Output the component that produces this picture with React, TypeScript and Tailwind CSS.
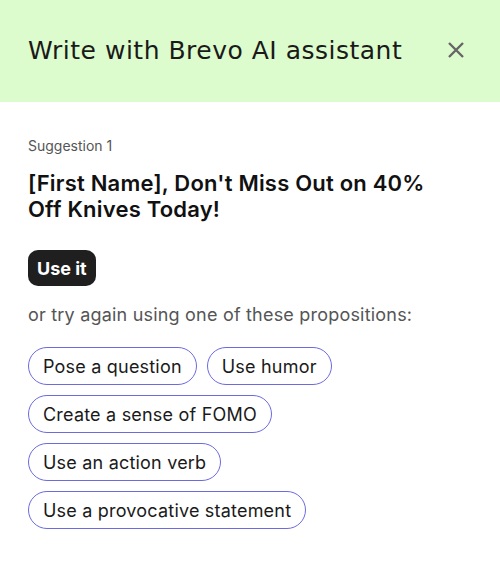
import React from "react";

const chips = [
  ["Pose a question", "Use humor"],
  ["Create a sense of FOMO"],
  ["Use an action verb"],
  ["Use a provocative statement"],
];

export default function App() {
  return (
    <div className="w-[500px] h-[569px] bg-white" style={{ fontFamily: "Inter, 'Noto Sans', sans-serif" }}>
      <div className="h-[102px] bg-[#ddfccd] flex items-center justify-between pl-[28px] pr-[36px]">
        <h1 className="text-[25px] text-[#1a1a1a] font-normal tracking-[0.5px]" style={{ fontFamily: "'DejaVu Sans', sans-serif" }}>
          Write with Brevo AI assistant
        </h1>
        <svg width="16" height="16" viewBox="0 0 16 16" className="mt-[-2px]">
          <path d="M1 1L15 15M15 1L1 15" stroke="#666" strokeWidth="2.4" />
        </svg>
      </div>
      <div className="px-[28px] pt-[36px]">
        <div className="text-[14px] text-[#555] leading-[16px]">Suggestion 1</div>
        <div className="mt-[16px] max-w-[420px] text-[22px] font-semibold leading-[26px] text-[#111] tracking-[0.2px]">
          [First Name], Don't Miss Out on 40% Off Knives Today!
        </div>
        <button className="mt-[28px] h-[36px] px-[9px] rounded-[10px] bg-[#1f1f1f] text-white text-[18px] font-bold block">
          Use it
        </button>
        <div className="mt-[17px] text-[18px] text-[#555] leading-[24px] tracking-[0.2px]">
          or try again using one of these propositions:
        </div>
        <div className="mt-[20px] flex flex-col gap-[10px]">
          {chips.map((row, i) => (
            <div key={i} className="flex gap-[10px]">
              {row.map((c) => (
                <button
                  key={c}
                  className="h-[38px] px-[14px] rounded-full border border-[#6d6ae0] text-[18px] tracking-[0.2px] text-[#1a1a1a]"
                >
                  {c}
                </button>
              ))}
            </div>
          ))}
        </div>
      </div>
    </div>
  );
}
